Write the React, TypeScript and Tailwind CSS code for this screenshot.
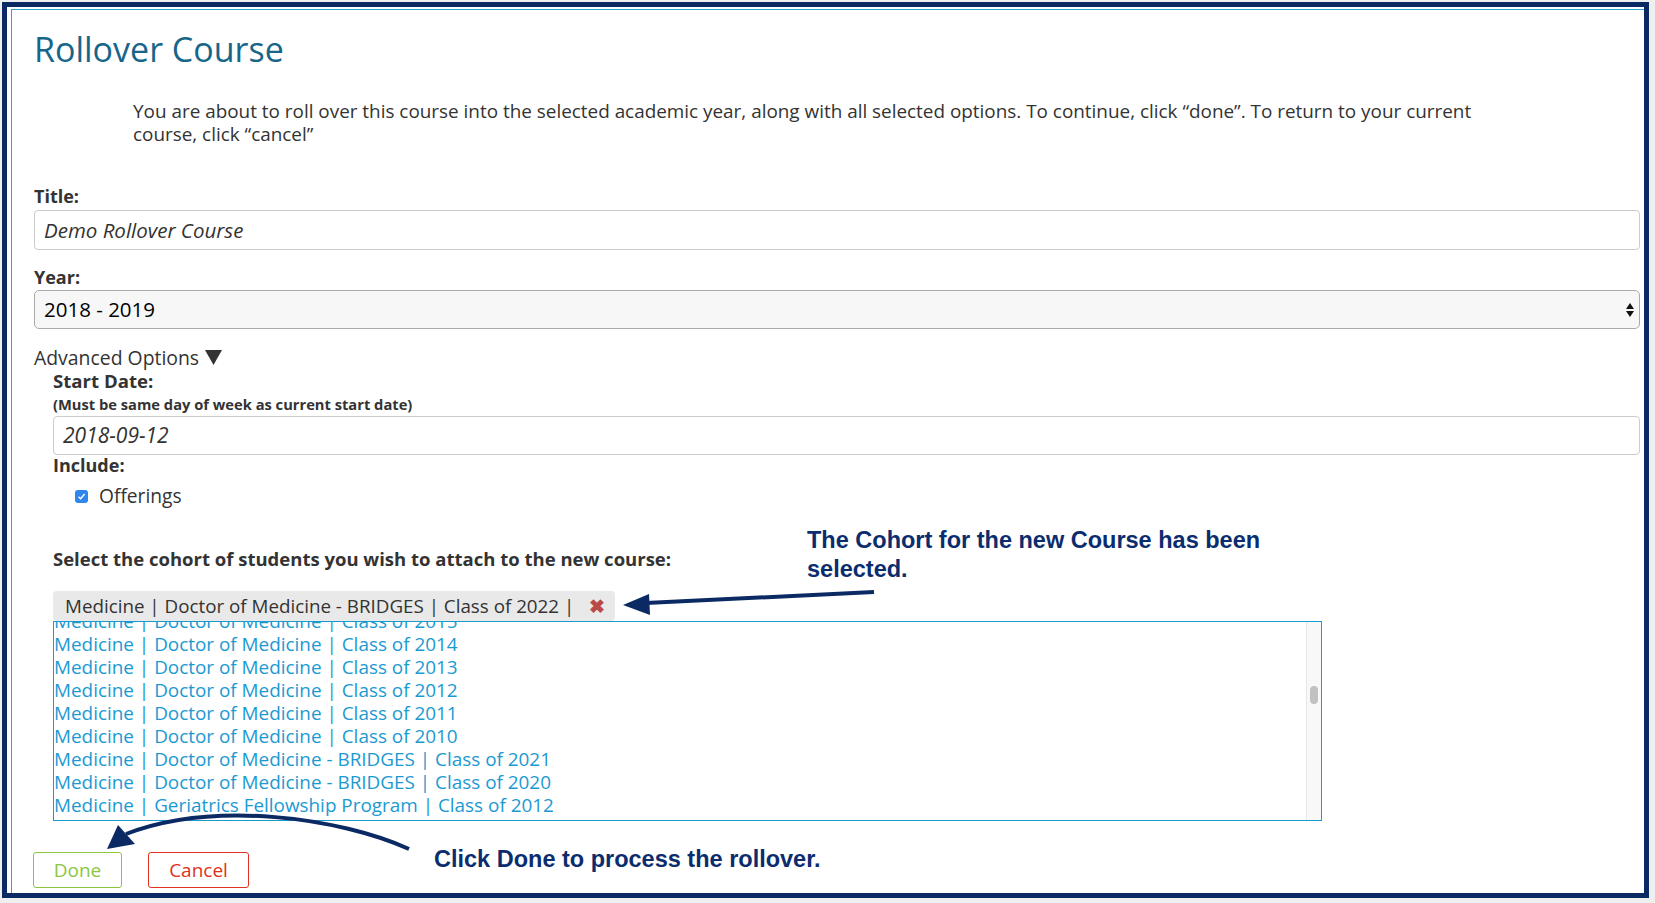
const cohorts = [
  "Medicine | Doctor of Medicine | Class of 2015",
  "Medicine | Doctor of Medicine | Class of 2014",
  "Medicine | Doctor of Medicine | Class of 2013",
  "Medicine | Doctor of Medicine | Class of 2012",
  "Medicine | Doctor of Medicine | Class of 2011",
  "Medicine | Doctor of Medicine | Class of 2010",
  "Medicine | Doctor of Medicine - BRIDGES | Class of 2021",
  "Medicine | Doctor of Medicine - BRIDGES | Class of 2020",
  "Medicine | Geriatrics Fellowship Program | Class of 2012",
  "Medicine | Hospital Medicine Fellowship Program | Class of 2013",
];

function Annotations() {
  return (
    <>
      <svg
        className="absolute left-0 top-0 pointer-events-none"
        width="1655"
        height="903"
        viewBox="0 0 1655 903"
      >
        <path d="M874 592 L646 603" stroke="#0b2a63" strokeWidth="4" fill="none" />
        <polygon points="623,605 649,594 650,615" fill="#0b2a63" />
        <path d="M409 849 C340 818, 215 800, 126 834" stroke="#0b2a63" strokeWidth="4" fill="none" />
        <polygon points="107,849 118,825 135,844" fill="#0b2a63" />
      </svg>
      <div className="absolute left-[807px] top-[526px] w-[480px] text-[23.5px] leading-[29px] font-bold text-[#0b2d6e] font-['Liberation_Sans',Arial,sans-serif]">
        The Cohort for the new Course has been selected.
      </div>
      <div className="absolute left-[434px] top-[845px] text-[23.5px] leading-[29px] font-bold text-[#0b2d6e] font-['Liberation_Sans',Arial,sans-serif]">
        Click Done to process the rollover.
      </div>
    </>
  );
}

export default function App() {
  return (
    <div className="relative w-[1655px] h-[903px] overflow-hidden bg-[#efefef] pl-[2px] pt-[2px] font-['Open_Sans',sans-serif] text-[#333]">
      <div className="w-[1647px] h-[896px] border-[5px] border-[#0b2a63] bg-white pl-[4px] pt-[2px]">
        <div className="h-full border-l border-t border-[#2aa3cf] pl-[22px] pr-[4px]">
          <h1 className="mt-[19px] text-[34px] leading-[40px] text-[#17668a]">Rollover Course</h1>

          <p className="mt-[31px] ml-[99px] text-[18.9px] leading-[23px]">
            You are about to roll over this course into the selected academic year, along with all selected options. To continue, click “done”. To return to your current
            <br />
            course, click “cancel”
          </p>

          <div className="mt-[39px] text-[18px] leading-[23px] font-bold">Title:</div>
          <div className="mt-[2px] h-[40px] border border-[#cccccc] rounded-[4px] px-[9px] flex items-center italic text-[20.5px]">
            Demo Rollover Course
          </div>

          <div className="mt-[16px] text-[18px] leading-[23px] font-bold">Year:</div>
          <div className="mt-[1px] h-[39px] bg-[#f7f7f7] border border-[#aaaaaa] rounded-[5px] pl-[9px] pr-[4px] flex items-center justify-between text-[20.5px] text-black">
            <span>2018 - 2019</span>
            <svg width="10" height="16" viewBox="0 0 10 16">
              <polygon points="5,1 9,7 1,7" fill="#111" />
              <polygon points="1,9 9,9 5,15" fill="#111" />
            </svg>
          </div>

          <div className="mt-[17px] flex items-center gap-[6px] text-[19.4px] leading-[23px]">
            <span>Advanced Options</span>
            <svg width="17" height="15" viewBox="0 0 17 15">
              <polygon points="0,0 17,0 8.5,15" fill="#333" />
            </svg>
          </div>

          <div className="ml-[19px]">
            <div className="text-[18.6px] leading-[23px] font-bold">Start Date:</div>
            <div className="mt-[2px] text-[14.7px] leading-[20px] font-bold">(Must be same day of week as current start date)</div>
            <div className="mt-[2px] h-[39px] border border-[#cccccc] rounded-[4px] px-[9px] flex items-center italic text-[21px]">
              2018-09-12
            </div>
            <div className="text-[18px] leading-[20px] font-bold">Include:</div>
            <div className="mt-[10px] h-[23px] pl-[22px] flex items-center gap-[11px] text-[19.2px]">
              <span className="w-[13px] h-[13px] rounded-[3px] bg-[#2f86ec] flex items-center justify-center">
                <svg width="9" height="9" viewBox="0 0 9 9">
                  <path d="M1.5 4.8 L3.6 6.8 L7.6 2" stroke="#fff" strokeWidth="1.4" fill="none" />
                </svg>
              </span>
              <span>Offerings</span>
            </div>

            <div className="mt-[39px] text-[18.5px] leading-[23px] font-bold">
              Select the cohort of students you wish to attach to the new course:
            </div>

            <div className="mt-[21px] w-[562px] h-[30px] bg-[#e9e9e9] rounded-[4px] pl-[12px] flex items-center gap-[15px] text-[18.8px]">
              <span className="whitespace-nowrap">Medicine | Doctor of Medicine - BRIDGES | Class of 2022 |</span>
              <span className="text-[#b94a48] text-[19px] font-bold leading-none">✖</span>
            </div>

            <div className="w-[1269px] h-[200px] border border-[#1a9bd0] flex overflow-hidden">
              <div className="flex-1 overflow-hidden">
                <div className="-mt-[12px]">
                  {cohorts.map((c) => (
                    <div key={c} className="h-[23px] leading-[23px] text-[18.9px] text-[#1b9ad2] whitespace-nowrap">
                      {c}
                    </div>
                  ))}
                </div>
              </div>
              <div className="w-[15px] bg-[#f8f8f8] border-l border-[#e6e6e6] pt-[64px] flex justify-center">
                <div className="w-[8px] h-[18px] rounded-full bg-[#c1c1c1]" />
              </div>
            </div>
          </div>

          <div className="mt-[31px] -ml-[1px] flex gap-[26px] text-[19px]">
            <button className="w-[89px] h-[36px] border border-[#8cc63f] rounded-[3px] text-[#8cc63f] bg-white">Done</button>
            <button className="w-[101px] h-[36px] border border-[#e0301e] rounded-[3px] text-[#e0301e] bg-white">Cancel</button>
          </div>
        </div>
      </div>
      <Annotations />
    </div>
  );
}
